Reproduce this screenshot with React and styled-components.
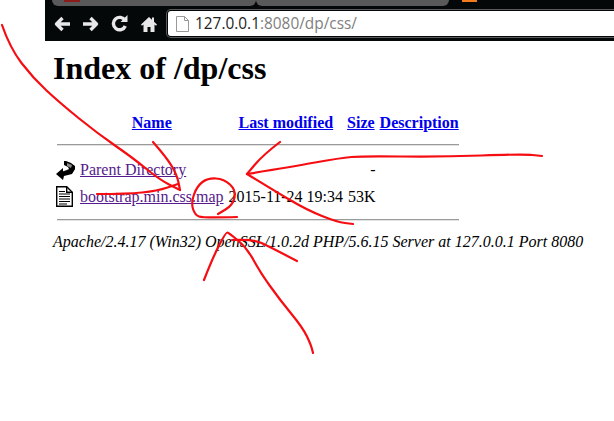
import React from 'react';
import styled, { createGlobalStyle } from 'styled-components';

const GlobalStyle = createGlobalStyle`
  html, body {
    margin: 0;
    background: #fff;
  }
  body {
    font-family: "Liberation Serif", "Times New Roman", serif;
    font-size: 16px;
    color: #000;
  }
`;

const Page = styled.div`
  position: relative;
  width: 614px;
  height: 421px;
  overflow: hidden;
`;

const Browser = styled.div`
  margin-left: 45px;
  height: 41px;
  background: #050808;
  display: flex;
  flex-direction: column;
`;

const TabStrip = styled.div`
  height: 7px;
  display: flex;
  align-items: flex-start;
`;

const Tab = styled.div`
  margin-left: 7px;
  width: 192px;
  height: 6px;
  background: #595959;
  border-radius: 0 0 6px 6px;
  padding-left: 12px;
`;

const Favicon = styled.div`
  width: 16px;
  height: 2px;
  background: #8c1c1c;
`;

const SecondTab = styled(Tab)`
  margin-left: 0;
  width: 193px;
  padding: 0;
`;

const OrangeFavicon = styled.div`
  margin-left: 13px;
  width: 15px;
  height: 2px;
  background: #f07a1c;
`;

const Toolbar = styled.div`
  flex: 1;
  display: flex;
  align-items: flex-start;
  padding: 4px 0 0 2px;
`;

const NavButton = styled.div`
  width: 29px;
  height: 25px;
  display: flex;
  align-items: center;
  justify-content: center;
  color: #e8e8e8;
`;

const AddressBar = styled.div`
  flex: 1;
  height: 25px;
  margin-left: 5px;
  background: #fff;
  border-radius: 3px 0 0 3px;
  box-shadow: 0 0 0 1px #050808, 0 0 0 2px #5a5a5a;
  display: flex;
  align-items: center;
  gap: 6px;
  padding-left: 8px;
  font-family: "Open Sans", "Liberation Sans", sans-serif;
  font-size: 15.4px;
`;

const Host = styled.span`
  color: #222;
`;

const UrlRest = styled.span`
  color: #808080;
`;

const Content = styled.main`
  padding-left: 53px;
`;

const Heading = styled.h1`
  margin: 9px 0 24px;
  font-size: 32px;
  line-height: 37px;
  font-weight: bold;
`;

const Listing = styled.table`
  border-spacing: 2px;
  border-collapse: separate;
`;

const HeaderCell = styled.th`
  padding: 1px ${props => (props.$wide ? 2 : 1)}px 1px 1px;
  text-align: center;
  font-weight: bold;
`;

const Cell = styled.td`
  padding: 1px ${props => (props.$wide ? 2 : 1)}px 1px 1px;
  text-align: ${props => (props.$right ? 'right' : 'left')};
  vertical-align: middle;
`;

const IconCell = styled.td`
  padding: 2px 1px;
  vertical-align: middle;
`;

const Link = styled.a`
  color: ${props => (props.$visited ? '#551a8b' : '#0000ee')};
  text-decoration: underline;
`;

const Rule = styled.hr`
  margin: ${props => (props.$last ? '7px 0 0 1px' : '8px 0 9px 1px')};
  border: 0;
  border-top: 1px solid #9a9a9a;
  border-bottom: 1px solid #e2e2e2;
`;

const Footer = styled.address`
  margin-top: 9px;
  font-style: italic;
`;

const Scribbles = styled.svg`
  position: absolute;
  left: 0;
  top: 0;
  pointer-events: none;
`;

const IconSvg = styled.svg`
  display: block;
`;

const BackIcon = () => (
  <IconSvg width="18" height="16" viewBox="0 0 18 16" fill="none" stroke="currentColor" strokeWidth="3.4" strokeLinejoin="round">
    <path d="M17 8H4M9.5 2 3.5 8l6 6" />
  </IconSvg>
);

const ForwardIcon = () => (
  <IconSvg width="18" height="16" viewBox="0 0 18 16" fill="none" stroke="currentColor" strokeWidth="3.4" strokeLinejoin="round">
    <path d="M1 8h13M8.5 2l6 6-6 6" />
  </IconSvg>
);

const ReloadIcon = () => (
  <IconSvg width="17" height="17" viewBox="0 0 17 17" fill="none">
    <path d="M14 5.5A6.2 6.2 0 1 0 14.3 11" stroke="currentColor" strokeWidth="3.4" />
    <path d="M9.5 7h7V0z" fill="currentColor" />
  </IconSvg>
);

const HomeIcon = () => (
  <IconSvg width="16" height="16" viewBox="0 0 16 16" fill="currentColor">
    <path d="M8 1 0 8.5 1 9.7l1.5-1.3V16H6.5v-5h3v5h4V8.4L15 9.7l1-1.2-3-2.8V1.5h-2v2.3z" />
  </IconSvg>
);

const PageIcon = () => (
  <IconSvg width="13" height="16" viewBox="0 0 13 16" fill="#fff" stroke="#999">
    <path d="M.5.5h8l4 4v11H.5z" />
    <path d="M8.5.5v4h4" fill="none" />
  </IconSvg>
);

const BackDirIcon = () => (
  <IconSvg width="20" height="20" viewBox="0 0 20 20">
    <path d="M8 1l2 0 5 2 4 3v3l-3 4-7 2-1-4 3-1 2-1-1-2-4-2z" fill="#000" />
    <path d="M11 3l5 2-1 3-4-2z" fill="#8a8a8a" />
    <path d="M0 14l7-6v3l4 1 8-3-3 5-8 2-1 4z" fill="#000" />
  </IconSvg>
);

const FileIcon = () => (
  <IconSvg width="17" height="21" viewBox="0 0 17 21" fill="#fff" stroke="#000">
    <path d="M.7.7h10l5.6 5.6v14H.7z" strokeWidth="1.4" />
    <path d="M10.7.7v5.6h5.6" fill="none" strokeWidth="1.4" />
    <path d="M3 5.5h6M3 8h11M3 10.5h11M3 13h11M3 15.5h11M3 18h8" strokeWidth="1.2" />
  </IconSvg>
);

// freehand lines, smoothed through the midpoints of the traced points
const smooth = points => {
  let d = `M${points[0]} ${points[1]}`;
  for (let i = 2; i < points.length - 2; i += 2) {
    const mx = (points[i] + points[i + 2]) / 2;
    const my = (points[i + 1] + points[i + 3]) / 2;
    d += `Q${points[i]} ${points[i + 1]} ${mx} ${my}`;
  }
  const n = points.length;
  return `${d}L${points[n - 2]} ${points[n - 1]}`;
};

const strokes = [
  [2, 25, 10, 48, 33, 78, 60, 103, 97, 133, 133, 158, 160, 180, 180, 190],
  [153, 142, 167, 158, 177, 175, 180, 190],
  [97, 194, 127, 194, 157, 191, 178, 184],
  [237, 217, 203, 218, 195, 215, 191, 203, 197, 186, 208, 178, 224, 179, 236, 190, 233, 205, 218, 214],
  [280, 142, 263, 155, 247, 174],
  [247, 174, 290, 167, 340, 158, 363, 156, 440, 157, 523, 154, 542, 156],
  [247, 174, 273, 190, 307, 210, 337, 222, 353, 224],
  [204, 280, 213, 257, 226, 232, 229, 233, 247, 248, 260, 272, 280, 300, 303, 328, 311, 345, 313, 353],
  [232, 240, 253, 239, 270, 247, 297, 261],
];

const App = () => (
  <Page>
    <GlobalStyle />
    <Browser>
      <TabStrip>
        <Tab>
          <Favicon />
        </Tab>
        <SecondTab />
        <OrangeFavicon />
      </TabStrip>
      <Toolbar>
        <NavButton><BackIcon /></NavButton>
        <NavButton><ForwardIcon /></NavButton>
        <NavButton><ReloadIcon /></NavButton>
        <NavButton><HomeIcon /></NavButton>
        <AddressBar>
          <PageIcon />
          <span>
            <Host>127.0.0.1</Host>
            <UrlRest>:8080/dp/css/</UrlRest>
          </span>
        </AddressBar>
      </Toolbar>
    </Browser>
    <Content>
      <Heading>Index of /dp/css</Heading>
      <Listing>
        <thead>
          <tr>
            <HeaderCell />
            <HeaderCell $wide><Link href="#">Name</Link></HeaderCell>
            <HeaderCell><Link href="#">Last modified</Link></HeaderCell>
            <HeaderCell $wide><Link href="#">Size</Link></HeaderCell>
            <HeaderCell><Link href="#">Description</Link></HeaderCell>
          </tr>
          <tr>
            <HeaderCell colSpan={5}><Rule /></HeaderCell>
          </tr>
        </thead>
        <tbody>
          <tr>
            <IconCell><BackDirIcon /></IconCell>
            <Cell $wide><Link $visited href="#">Parent Directory</Link></Cell>
            <Cell />
            <Cell $right>-</Cell>
            <Cell />
          </tr>
          <tr>
            <IconCell><FileIcon /></IconCell>
            <Cell $wide><Link $visited href="#">bootstrap.min.css.map</Link></Cell>
            <Cell>2015-11-24 19:34</Cell>
            <Cell $right>53K</Cell>
            <Cell />
          </tr>
          <tr>
            <Cell colSpan={5}><Rule $last /></Cell>
          </tr>
        </tbody>
      </Listing>
      <Footer>Apache/2.4.17 (Win32) OpenSSL/1.0.2d PHP/5.6.15 Server at 127.0.0.1 Port 8080</Footer>
    </Content>
    <Scribbles width="614" height="421" viewBox="0 0 614 421" fill="none" stroke="#f50d12" strokeWidth="2.2" strokeLinecap="round" strokeLinejoin="round">
      {strokes.map(points => (
        <path key={points.join()} d={smooth(points)} />
      ))}
    </Scribbles>
  </Page>
);

export default App;
